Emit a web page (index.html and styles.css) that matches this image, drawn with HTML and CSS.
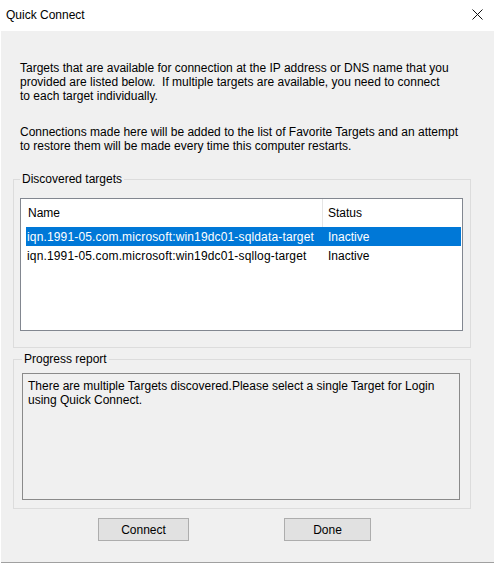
FILE: index.html
```html
<!DOCTYPE html>
<html lang="en">
<head>
  <meta charset="UTF-8" />
  <title>Quick Connect</title>
  <link rel="stylesheet" href="styles.css">
</head>
<body>
  <div class="window">
    <div class="titlebar">
      <span class="title">Quick Connect</span>
      <svg class="close" width="11" height="11" viewBox="0 0 11 11">
        <path d="M0.5 0.5 L10.5 10.5 M10.5 0.5 L0.5 10.5" stroke="#111" stroke-width="1" fill="none"/>
      </svg>
    </div>

    <div class="client">
      <p class="intro">Targets that are available for connection at the IP address or DNS name that you<br>provided are listed below.&nbsp; If multiple targets are available, you need to connect<br>to each target individually.</p>
      <p class="intro second">Connections made here will be added to the list of Favorite Targets and an attempt<br>to restore them will be made every time this computer restarts.</p>

      <fieldset class="group targets">
        <legend>Discovered targets</legend>
        <div class="listbox">
          <div class="list-head">
            <span class="col-name">Name</span>
            <span class="col-status">Status</span>
          </div>
          <div class="list-row selected">
            <span class="col-name">iqn.1991-05.com.microsoft:win19dc01-sqldata-target</span>
            <span class="col-status">Inactive</span>
          </div>
          <div class="list-row">
            <span class="col-name">iqn.1991-05.com.microsoft:win19dc01-sqllog-target</span>
            <span class="col-status">Inactive</span>
          </div>
        </div>
      </fieldset>

      <fieldset class="group progress">
        <legend>Progress report</legend>
        <div class="report">There are multiple Targets discovered.Please select a single Target for Login<br>using Quick Connect.</div>
      </fieldset>

      <div class="buttons">
        <button class="btn connect">Connect</button>
        <button class="btn done">Done</button>
      </div>
    </div>
  </div>
</body>
</html>
```

FILE: styles.css
```css
* {
  box-sizing: border-box;
}

body {
  margin: 0;
  background: #ffffff;
  font-family: "Liberation Sans", Arial, sans-serif;
  font-size: 12px;
  color: #000;
}

.window {
  width: 494px;
  height: 563px;
  display: flex;
  flex-direction: column;
}

.titlebar {
  height: 31px;
  display: flex;
  align-items: center;
  justify-content: space-between;
  padding: 0 11px 1px 6px;
  background: #ffffff;
}

.title {
  font-size: 12px;
  line-height: 14px;
}

.close {
  display: block;
  margin-top: -2px;
}

.client {
  flex: 1;
  margin-left: 1px;
  background: #f0f0f0;
  border-bottom: 1px solid #a0a0a0;
  padding: 0 23px 0 12px;
}

.intro {
  margin: 30px 0 0 7px;
  line-height: 14px;
}

.intro.second {
  margin-top: 22px;
}

.group {
  margin: 19px 0 0 0;
  border: 1px solid #dcdcdc;
  min-width: 0;
}

.group legend {
  padding: 0 2px;
  line-height: 14px;
}

.targets {
  padding: 12px 7px 16px 6px;
}

.progress {
  margin-top: 4px;
  padding: 7px 10px 8px 8px;
}

.listbox {
  height: 133px;
  background: #ffffff;
  border: 1px solid #828790;
}

.list-head {
  height: 28px;
  display: flex;
  align-items: center;
  padding-left: 7px;
}

.list-head .col-name {
  width: 295px;
  height: 28px;
  line-height: 28px;
  border-right: 1px solid #e5e5e5;
}

.list-row {
  height: 19px;
  display: flex;
  align-items: center;
  margin: 0 1px 0 5px;
  padding-left: 1px;
  letter-spacing: 0.15px;
}

.list-row .col-name {
  width: 296px;
}

.col-status {
  padding-left: 5px;
  letter-spacing: 0;
}

.list-row.selected {
  background: #0078d7;
  color: #ffffff;
}

.report {
  height: 127px;
  border: 1px solid #8a8a8a;
  background: #f0f0f0;
  padding: 5px 5px;
  line-height: 14px;
}

.buttons {
  display: flex;
  margin: 9px 0 0 85px;
  gap: 95px;
}

.btn {
  height: 23px;
  padding: 0;
  font-family: inherit;
  font-size: 12px;
  color: #000;
  background: #e1e1e1;
  border: 1px solid #adadad;
}

.connect {
  width: 91px;
}

.done {
  width: 87px;
}
```
